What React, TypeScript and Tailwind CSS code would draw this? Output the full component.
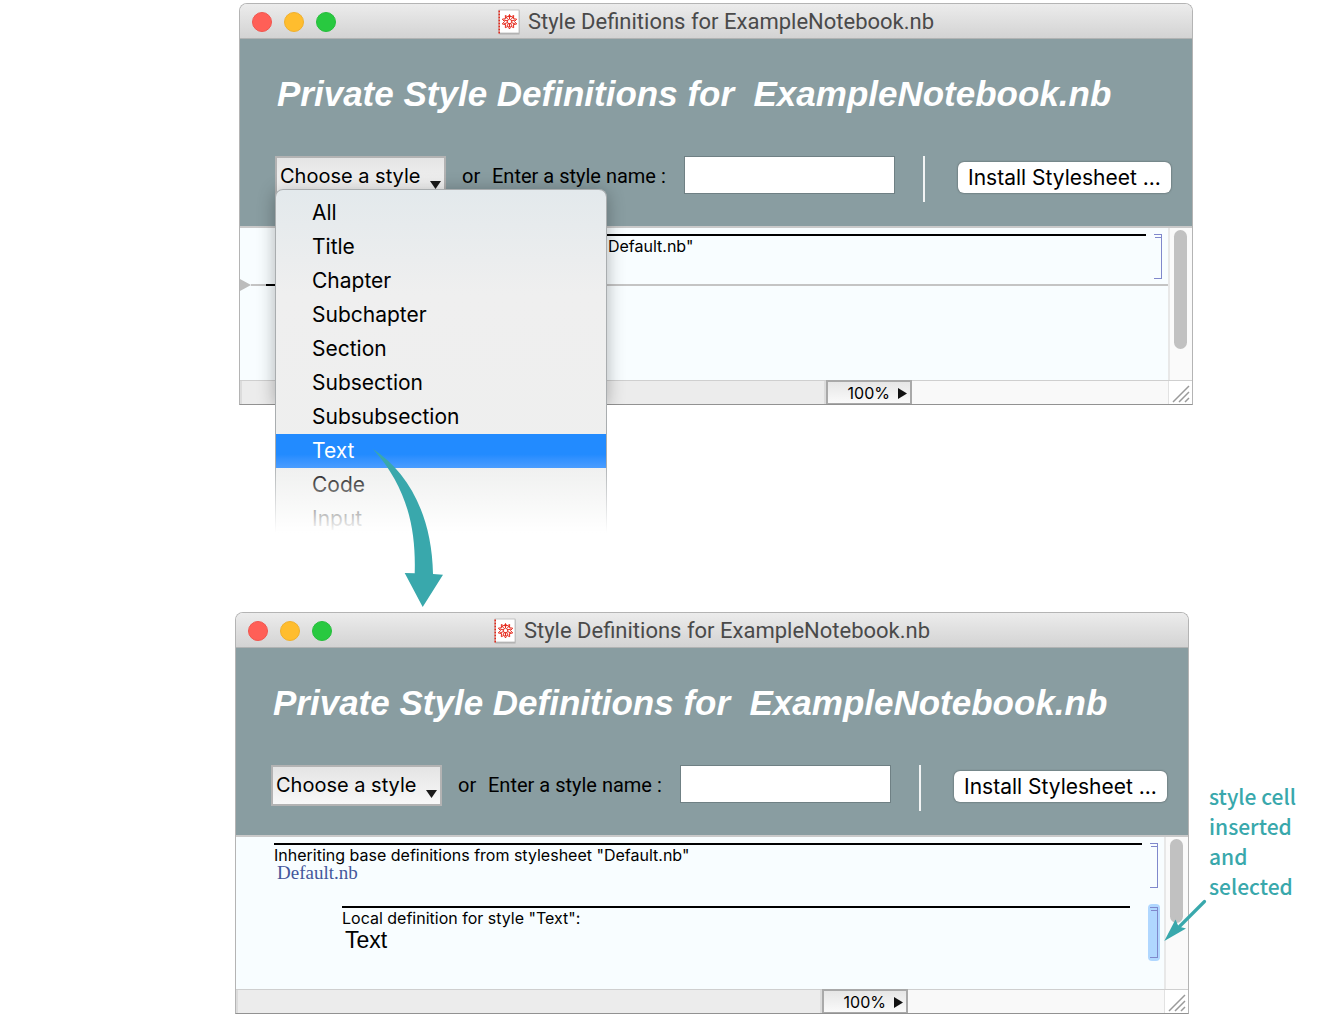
import type { ReactNode } from "react";
import clsx from "clsx";

const styleNames = [
  "All",
  "Title",
  "Chapter",
  "Subchapter",
  "Section",
  "Subsection",
  "Subsubsection",
  "Text",
  "Code",
  "Input",
];

function NotebookIcon() {
  return (
    <svg width="22" height="26" viewBox="0 0 22 26" aria-hidden="true">
      <rect x="1.5" y="1.5" width="20" height="24" fill="#b0b0b0" />
      <rect x="1" y="1" width="20" height="23" fill="#fff" stroke="#b9b9b9" strokeWidth=".8" />
      <path d="M1.2 1.5v23" stroke="#e02a1c" strokeWidth="1.6" strokeDasharray="2 1" />
      <g stroke="#e5281b" fill="none" strokeLinejoin="round">
        <path
          d="M11.5 5.500l1.300 2.500 2.900-1.500-.2 3.200 3.200.5-2.200 2.300 2.200 2.500-3.200.5.2 3.200-2.900-1.400-1.300 2.700-1.300-2.700-2.900 1.400.2-3.200-3.200-.5 2.200-2.500-2.200-2.300 3.200-.5-.2-3.200 2.900 1.500z"
          strokeWidth="1"
        />
        <path
          d="M11.500 6v4M11.500 15v3M6 11l3 .8M17 11l-3 .8M6 15l3-1.300M17 15l-3-1.300M8 8l2 2.500M15 8l-2 2.500M9 17l1.200-2.300M14 17l-1.200-2.300"
          strokeWidth="1"
        />
        <path d="M11.500 10l2.400 1.800-.9 2.800h-3l-.9-2.800z" strokeWidth="1" />
      </g>
    </svg>
  );
}

function TitleBar() {
  return (
    <div className="relative flex h-[35px] items-center justify-center border-b border-[#b1b3b3] bg-linear-to-b from-[#ececec] to-[#d3d3d3] pt-px">
      <div className="absolute left-3 flex gap-3">
        <button aria-label="Close" className="size-5 rounded-full border border-[#f0564f] bg-[#ff5f57]" />
        <button aria-label="Minimize" className="size-5 rounded-full border border-[#f0b02c] bg-[#ffbd2e]" />
        <button aria-label="Zoom" className="size-5 rounded-full border border-[#26be3c] bg-[#28c940]" />
      </div>
      <div className="flex items-center gap-2 text-[#4a4a4a]">
        <NotebookIcon />
        <span className="font-[Roboto,sans-serif] text-[22px] leading-6">
          Style Definitions for ExampleNotebook.nb
        </span>
      </div>
    </div>
  );
}

function StyleMenu() {
  return (
    <div className="absolute top-[33px] left-0 z-10 w-[332px]">
      {/* the shadow falls on the window only */}
      <div className="absolute inset-x-0 top-0 h-[216px] rounded-t-lg shadow-[0_2px_18px_rgba(0,0,0,0.3)] [clip-path:inset(-20px_-30px_0_-30px)]" />
      <ul className="relative rounded-t-lg border border-b-0 border-[#a9adaf] bg-linear-to-b from-[#e3e9ec] via-[#efefef] via-30% to-[#eeefee] pt-1.5 text-[21px] leading-[34px]">
        {styleNames.map((name) => (
          <li key={name}>
            <button
              className={clsx(
                "block h-[34px] w-full pl-9 text-left",
                name === "Text"
                  ? "bg-linear-to-b from-[#228bff] from-60% to-[#4a9dff] text-white"
                  : "text-black",
              )}
            >
              {name}
            </button>
          </li>
        ))}
      </ul>
      {/* menu fades out below the highlighted row */}
      <div className="pointer-events-none absolute -inset-x-1 top-[279px] -bottom-1 bg-linear-to-b from-white/10 to-white to-90%" />
      <svg
        className="pointer-events-none absolute top-[258px] left-[96px]"
        width="76"
        height="162"
        viewBox="371 447 76 162"
        aria-hidden="true"
      >
        <path
          d="M373 449C408 472 432 515 433 574L443 574.7 422.7 607 404.7 573 414.7 573.3C416 530 408 488 373 449Z"
          fill="#39a8ac"
        />
      </svg>
    </div>
  );
}

function Toolbar({ id, menuOpen }: { id: string; menuOpen?: boolean }) {
  return (
    <div className="flex items-start text-black">
      <div className="relative">
        <select
          aria-label="Choose a style"
          className="h-[41px] w-[171px] appearance-none border-2 border-[#b3b3b3] bg-linear-to-b from-[#e4e4e4] to-[#f8f8f8] pb-0.5 pl-[3px] text-xl"
        >
          <option>Choose a style</option>
        </select>
        <svg className="pointer-events-none absolute right-[5px] bottom-2" width="11" height="8" aria-hidden="true">
          <path d="M0 0h11L5.500 8z" fill="#1a1a1a" />
        </svg>
        {menuOpen && <StyleMenu />}
      </div>
      <span className="ml-4 w-[30px] font-[Roboto,sans-serif] text-xl leading-[41px]">or</span>
      <label htmlFor={id} className="w-48 font-[Roboto,sans-serif] text-xl leading-[41px] whitespace-nowrap">
        Enter a style name :
      </label>
      <input id={id} type="text" className="h-[38px] w-[211px] border border-[#6f8084] bg-white px-2 text-xl" />
      <div className="ml-7 h-[46px] w-0.5 bg-[#f2f4f4]" />
      <button className="mt-1.5 ml-[33px] h-[31px] w-[213px] rounded-md bg-white text-[21px] leading-[31px] whitespace-nowrap shadow-[0_0_2px_rgba(0,0,0,0.5)]">
        Install Stylesheet ...
      </button>
    </div>
  );
}

function Bracket({ className }: { className: string }) {
  return (
    <div className={clsx("relative w-2 shrink-0 border border-l-0 border-[#8088cc]", className)}>
      <div className="absolute top-0.5 right-0 h-px w-1.5 bg-[#8088cc]" />
    </div>
  );
}

function StatusBar() {
  return (
    <div className="flex h-6 border-t border-[#cfcfcf]">
      <div className="flex-1 border-2 border-y-0 border-[#dcdcdc] bg-[#ececec]" />
      <button className="-mt-px flex w-[86px] items-center justify-end gap-2 border-2 border-b border-[#a9a9a9] bg-linear-to-b from-[#e6e6e6] to-[#fafafa] pt-px pr-[3px] text-base leading-5">
        100%
        <svg width="9" height="11" aria-hidden="true">
          <path d="M0 0v11L9 5.500z" fill="#111" />
        </svg>
      </button>
      <div className="w-64 bg-[#f9f9f9]" />
      <div className="w-6 border-l border-[#e2e2e2] bg-white">
        <svg width="22" height="23" aria-hidden="true">
          <path d="M4 21L20 5M10 21L20 11M16 21L20 17" stroke="#9a9a9a" strokeWidth="1.500" />
        </svg>
      </div>
    </div>
  );
}

type NotebookWindowProps = {
  id: string;
  menuOpen?: boolean;
  thumbClass: string;
  children: ReactNode;
};

function NotebookWindow({ id, menuOpen, thumbClass, children }: NotebookWindowProps) {
  return (
    <section className="min-w-0 flex-1 rounded-t-lg border border-[#b4b4b4] border-b-[#929292]">
      <div className="overflow-hidden rounded-t-[7px]">
        <TitleBar />
      </div>
      <header className="bg-[#899da1] pt-[35px] pr-5 pb-6 pl-[35px]">
        <h1 className="mb-[42px] pl-0.5 font-['Liberation_Sans',Arial,sans-serif] text-[35px] leading-10 font-bold whitespace-pre text-white italic">
          {"Private Style Definitions for  ExampleNotebook.nb"}
        </h1>
        <Toolbar id={id} menuOpen={menuOpen} />
      </header>
      <div className="flex h-[154px] border-t-2 border-[#c9c9c9] bg-[#f8fdff]">
        <div className="flex-1 pt-1.5">{children}</div>
        <div className="w-6 border-l-2 border-[#e8e8e8] bg-[#fafafa] px-1 pt-0.5">
          <div className={clsx("w-[13px] rounded-full bg-[#c1c1c1]", thumbClass)} />
        </div>
      </div>
      <StatusBar />
    </section>
  );
}

function BaseCell() {
  return (
    <div className="flex gap-2 pr-1.5 pl-[38px]">
      <div className="flex-1 border-t-2 border-black">
        <p className="text-base leading-5">Inheriting base definitions from stylesheet "Default.nb"</p>
        <a
          href="#default"
          className="block pl-[3px] font-['Liberation_Serif',serif] text-[19px] leading-4 text-[#44579c]"
        >
          Default.nb
        </a>
      </div>
      <Bracket className="h-[45px]" />
    </div>
  );
}

export default function App() {
  return (
    <main className="min-h-screen bg-white pt-[3px] font-[Inter,sans-serif] text-black">
      <div className="relative z-10 flex pr-[147px] pl-[239px]">
        <NotebookWindow id="style-name-before" menuOpen thumbClass="h-[119px]">
          <BaseCell />
          {/* insertion point between cells */}
          <div className="flex items-center">
            <svg width="11" height="12" aria-hidden="true">
              <path d="M0 0v12L11 6z" fill="#bcbcbc" />
            </svg>
            <div className="h-0.5 w-[15px] bg-[#c4c4c4]" />
            <div className="h-0.5 w-10 bg-black" />
            <div className="h-0.5 flex-1 bg-[#c4c4c4]" />
          </div>
        </NotebookWindow>
      </div>

      <div className="mt-[207px] flex pl-[235px]">
        <NotebookWindow id="style-name-after" thumbClass="h-[84px]">
          <BaseCell />
          <div className="mt-4 flex pr-1 pl-[106px]">
            <div className="mt-0.5 mr-[18px] flex-1 border-t-2 border-black">
              <p className="text-base leading-5">Local definition for style "Text":</p>
              <p className="pl-[3px] font-['Liberation_Sans',Arial,sans-serif] text-[23px] leading-6">Text</p>
            </div>
            <div className="flex h-[57px] w-3 justify-center rounded-sm bg-[#b0d7ff] py-[3px]">
              <Bracket className="h-[51px]" />
            </div>
          </div>
        </NotebookWindow>
        <aside className="relative w-[151px] pt-[169px] pl-5">
          <p className="w-24 font-['Noto_Sans_CJK_SC',sans-serif] text-[21px] leading-[30px] font-medium text-[#39a8ac]">
            style cell inserted and selected
          </p>
          <svg
            className="absolute top-[286px] -left-[27px]"
            width="46"
            height="46"
            viewBox="1162 898 46 46"
            aria-hidden="true"
          >
            <path d="M1204.500 901.500L1178 928" stroke="#39a8ac" strokeWidth="3.200" strokeLinecap="round" />
            <path d="M1164.300 941L1175.500 919.500 1178.500 926.500 1186 928.500Z" fill="#39a8ac" />
          </svg>
        </aside>
      </div>
    </main>
  );
}
